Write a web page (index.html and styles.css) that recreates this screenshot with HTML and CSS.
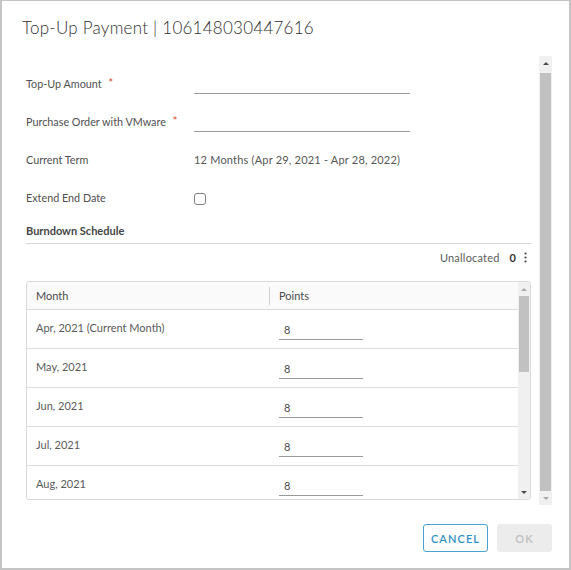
FILE: index.html
```html
<!DOCTYPE html>
<html>
<head>
<meta charset="utf-8">
<link rel="stylesheet" href="styles.css">
</head>
<body>
<div class="modal">
  <div class="modal-header">
    <h1 class="modal-title">Top-Up Payment | 106148030447616</h1>
  </div>
  <div class="modal-body">
    <div class="content">
      <div class="form-row">
        <label class="label">Top-Up Amount <span class="req">*</span></label>
        <div class="field"><span class="input"></span></div>
      </div>
      <div class="form-row">
        <label class="label">Purchase Order with VMware <span class="req">*</span></label>
        <div class="field"><span class="input"></span></div>
      </div>
      <div class="form-row">
        <label class="label">Current Term</label>
        <div class="field value">12 Months (Apr 29, 2021 - Apr 28, 2022)</div>
      </div>
      <div class="form-row">
        <label class="label">Extend End Date</label>
        <div class="field"><span class="checkbox"></span></div>
      </div>
      <div class="section-title">Burndown Schedule</div>
      <div class="unallocated">
        <span class="ua-label">Unallocated</span>
        <span class="ua-value">0</span>
        <span class="ua-menu">
          <svg width="3" height="11" viewBox="0 0 3 11"><circle cx="1.5" cy="1.5" r="1.1" fill="#444"/><circle cx="1.5" cy="5.5" r="1.1" fill="#444"/><circle cx="1.5" cy="9.5" r="1.1" fill="#444"/></svg>
        </span>
      </div>
      <div class="grid">
        <div class="grid-main">
          <div class="grid-head">
            <div class="col-month">Month</div>
            <div class="col-sep"></div>
            <div class="col-points">Points</div>
          </div>
          <div class="grid-row"><div class="col-month">Apr, 2021 (Current Month)</div><div class="col-points"><span class="cell-input">8</span></div></div>
          <div class="grid-row"><div class="col-month">May, 2021</div><div class="col-points"><span class="cell-input">8</span></div></div>
          <div class="grid-row"><div class="col-month">Jun, 2021</div><div class="col-points"><span class="cell-input">8</span></div></div>
          <div class="grid-row"><div class="col-month">Jul, 2021</div><div class="col-points"><span class="cell-input">8</span></div></div>
          <div class="grid-row"><div class="col-month">Aug, 2021</div><div class="col-points"><span class="cell-input">8</span></div></div>
        </div>
        <div class="sb sb-small">
          <div class="sb-arrow"><span class="tri-up light"></span></div>
          <div class="sb-thumb small-thumb"></div>
          <div class="sb-fill"></div>
          <div class="sb-arrow"><span class="tri-down"></span></div>
        </div>
      </div>
    </div>
    <div class="sb sb-outer">
      <div class="sb-arrow"><span class="tri-up"></span></div>
      <div class="sb-thumb outer-thumb"></div>
      <div class="sb-arrow"><span class="tri-down light"></span></div>
    </div>
  </div>
  <div class="modal-footer">
    <button class="btn btn-outline">CANCEL</button>
    <button class="btn btn-disabled">OK</button>
  </div>
</div>
</body>
</html>
```

FILE: styles.css
```css
* { box-sizing: border-box; }
html, body { margin: 0; padding: 0; background: #fff; }
body { font-family: "Lato", "Noto Sans", sans-serif; color: #565656; }

.modal {
  width: 571px;
  height: 570px;
  border: 2px solid #c4c4c4;
  border-top-width: 1px;
  display: flex;
  flex-direction: column;
  background: #fff;
  overflow: hidden;
}

.modal-header {
  height: 55px;
  padding: 16px 0 0 20px;
}
.modal-title {
  margin: 0;
  font-weight: 300;
  font-size: 17px;
  line-height: 22px;
  color: #2f2f2f;
  letter-spacing: 0.25px;
}

.modal-body {
  display: flex;
  height: 449px;
  margin-left: 24px;
  gap: 8px;
}
.content {
  width: 505px;
  overflow: hidden;
  padding-top: 8px;
}

.form-row {
  height: 38px;
  display: flex;
  align-items: center;
}
.label {
  width: 168px;
  font-size: 10.8px;
  color: #4f4f4f;
}
.req { color: #d9401f; margin-left: 4px; position: relative; top: -1px; }
.field { font-size: 11px; display: flex; align-items: center; }
.value { color: #565656; letter-spacing: 0.2px; }
.input {
  display: block;
  width: 216px;
  height: 21px;
  margin-top: 1px;
  border-bottom: 1px solid #9a9a9a;
}
.checkbox {
  display: block;
  width: 12px;
  height: 12px;
  margin-top: 4px;
  border: 1px solid #7f7f7f;
  border-radius: 3px;
}

.section-title {
  margin-top: 8px;
  font-size: 11px;
  font-weight: 700;
  color: #454545;
  line-height: 14px;
  padding-bottom: 5px;
  border-bottom: 1px solid #d7d7d7;
}

.unallocated {
  height: 27px;
  display: flex;
  justify-content: flex-end;
  align-items: center;
  font-size: 11px;
  padding-right: 4px;
}
.ua-label { color: #5c5c5c; letter-spacing: 0.2px; }
.ua-value { font-weight: 700; color: #333; margin-left: 10px; }
.ua-menu { display: flex; margin-left: 8px; }

.grid {
  margin-top: 10px;
  height: 219px;
  border: 1px solid #d9d9d9;
  border-radius: 3px;
  display: flex;
  overflow: hidden;
}
.grid-main {
  flex: 1;
  overflow: hidden;
}
.grid-head {
  height: 28px;
  background: #fafafa;
  border-bottom: 1px solid #dcdcdc;
  display: flex;
  align-items: center;
  font-size: 11px;
  color: #4a4a4a;
}
.col-month { width: 243px; padding-left: 9px; }
.col-sep { width: 1px; height: 18px; background: #d0d0d0; }
.col-points { padding-left: 9px; flex: 1; }
.grid-head .col-month { width: 242px; }

.grid-row {
  height: 39px;
  border-bottom: 1px solid #dcdcdc;
  display: flex;
  align-items: center;
  font-size: 11px;
  color: #5a5a5a;
}
.grid-row .col-month { margin-top: -4px; }
.cell-input {
  display: block;
  width: 84px;
  height: 20px;
  padding: 3px 0 0 5px;
  margin-top: 1px;
  border-bottom: 1px solid #9a9a9a;
  color: #4a4a4a;
}

.sb {
  display: flex;
  flex-direction: column;
  background: #f0f0f0;
  width: 13px;
}
.sb-outer { height: 449px; }
.sb-small { width: 12px; }
.sb-arrow {
  height: 14px;
  display: flex;
  align-items: center;
  justify-content: center;
}
.sb-thumb { background: #c1c1c1; margin: 0 1px; }
.outer-thumb { flex: 1; margin-top: 3px; }
.small-thumb { height: 76px; margin-top: 0; }
.sb-fill { flex: 1; }
.tri-up, .tri-down {
  width: 0; height: 0;
  border-left: 3px solid transparent;
  border-right: 3px solid transparent;
}
.tri-up { border-bottom: 3px solid #4a4a4a; }
.tri-down { border-top: 3px solid #4a4a4a; }
.tri-up.light { border-bottom-color: #a8a8a8; }
.tri-down.light { border-top-color: #a8a8a8; }

.modal-footer {
  display: flex;
  justify-content: flex-end;
  gap: 9px;
  padding: 19px 17px 0 0;
}
.btn {
  height: 28px;
  font-family: "Lato", "Noto Sans", sans-serif;
  font-size: 11px;
  font-weight: 600;
  letter-spacing: 1.1px;
  border-radius: 3px;
  padding: 0;
}
.btn-outline {
  width: 65px;
  background: #fff;
  color: #2f8fc2;
  border: 1px solid #4aa3d3;
}
.btn-disabled {
  width: 55px;
  background: #ececec;
  color: #c0c0c0;
  border: 1px solid #ececec;
}
```
